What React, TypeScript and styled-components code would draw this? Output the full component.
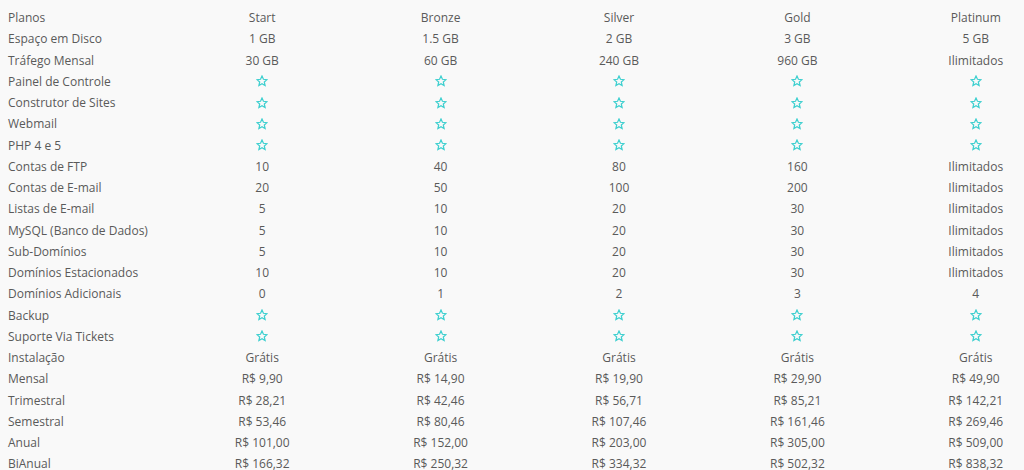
import { Fragment } from 'react';
import styled, { createGlobalStyle } from 'styled-components';

const GlobalStyle = createGlobalStyle`
  html, body {
    margin: 0;
    padding: 0;
    background: #f9f9f9;
    overflow: hidden;
  }
  body {
    font-family: "Open Sans", "Liberation Sans", sans-serif;
  }
`;

const Wrapper = styled.div`
  width: 1024px;
  overflow: hidden;
  padding-top: 7px;
`;

const Table = styled.div`
  display: grid;
  grid-template-columns: 173px repeat(5, 178.4px);
  grid-auto-rows: 21.25px;
  font-size: 12px;
  color: #5a5a5a;
`;

const Label = styled.div`
  padding-left: 8px;
  display: flex;
  align-items: center;
  white-space: nowrap;
`;

const Cell = styled.div`
  display: flex;
  align-items: center;
  justify-content: center;
  white-space: nowrap;
`;

const StarIcon = () => (
  <svg width="12" height="12" viewBox="0 0 24 24" aria-hidden="true">
    <polygon
      points="12,2 14.9,8.6 22,9.3 16.6,14 18.2,21 12,17.3 5.8,21 7.4,14 2,9.3 9.1,8.6"
      fill="none"
      stroke="#3ccfcf"
      strokeWidth="2.4"
      strokeLinejoin="miter"
    />
  </svg>
);

const STAR = '*';

const rows: [string, string[]][] = [
  ['Planos', ['Start', 'Bronze', 'Silver', 'Gold', 'Platinum']],
  ['Espaço em Disco', ['1 GB', '1.5 GB', '2 GB', '3 GB', '5 GB']],
  ['Tráfego Mensal', ['30 GB', '60 GB', '240 GB', '960 GB', 'Ilimitados']],
  ['Painel de Controle', [STAR, STAR, STAR, STAR, STAR]],
  ['Construtor de Sites', [STAR, STAR, STAR, STAR, STAR]],
  ['Webmail', [STAR, STAR, STAR, STAR, STAR]],
  ['PHP 4 e 5', [STAR, STAR, STAR, STAR, STAR]],
  ['Contas de FTP', ['10', '40', '80', '160', 'Ilimitados']],
  ['Contas de E-mail', ['20', '50', '100', '200', 'Ilimitados']],
  ['Listas de E-mail', ['5', '10', '20', '30', 'Ilimitados']],
  ['MySQL (Banco de Dados)', ['5', '10', '20', '30', 'Ilimitados']],
  ['Sub-Domínios', ['5', '10', '20', '30', 'Ilimitados']],
  ['Domínios Estacionados', ['10', '10', '20', '30', 'Ilimitados']],
  ['Domínios Adicionais', ['0', '1', '2', '3', '4']],
  ['Backup', [STAR, STAR, STAR, STAR, STAR]],
  ['Suporte Via Tickets', [STAR, STAR, STAR, STAR, STAR]],
  ['Instalação', ['Grátis', 'Grátis', 'Grátis', 'Grátis', 'Grátis']],
  ['Mensal', ['R$ 9,90', 'R$ 14,90', 'R$ 19,90', 'R$ 29,90', 'R$ 49,90']],
  ['Trimestral', ['R$ 28,21', 'R$ 42,46', 'R$ 56,71', 'R$ 85,21', 'R$ 142,21']],
  ['Semestral', ['R$ 53,46', 'R$ 80,46', 'R$ 107,46', 'R$ 161,46', 'R$ 269,46']],
  ['Anual', ['R$ 101,00', 'R$ 152,00', 'R$ 203,00', 'R$ 305,00', 'R$ 509,00']],
  ['BiAnual', ['R$ 166,32', 'R$ 250,32', 'R$ 334,32', 'R$ 502,32', 'R$ 838,32']],
];

export default function App() {
  return (
    <>
      <GlobalStyle />
      <Wrapper>
        <Table>
          {rows.map(([label, values]) => (
            <Fragment key={label}>
              <Label>{label}</Label>
              {values.map((v, i) => (
                <Cell key={i}>{v === STAR ? <StarIcon /> : v}</Cell>
              ))}
            </Fragment>
          ))}
        </Table>
      </Wrapper>
    </>
  );
}
